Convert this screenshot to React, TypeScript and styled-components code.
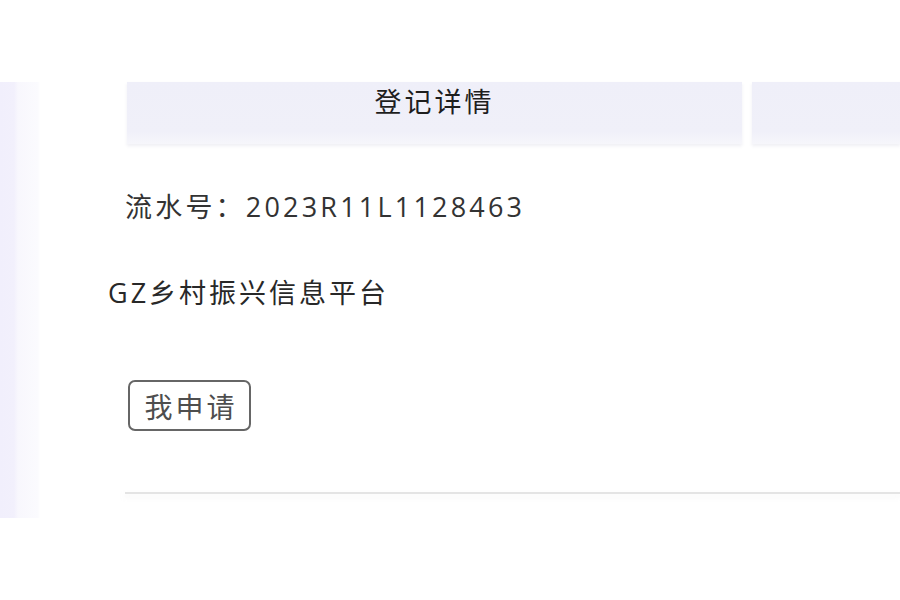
import React from "react";
import styled, { createGlobalStyle } from "styled-components";

const GlobalStyle = createGlobalStyle`
  html, body {
    margin: 0;
    padding: 0;
    background: #ffffff;
    overflow: hidden;
  }
  body {
    font-family: "Open Sans", "Noto Sans CJK SC", sans-serif;
  }
`;

const tabs = ["登记详情", ""];

const App = () => {
  return (
    <>
      <GlobalStyle />
      <Page>
        <SideStrip />
        <Main>
          <TabBar>
            {tabs.map((label, i) => (
              <Tab key={i} $grow={i > 0}>
                {label}
              </Tab>
            ))}
          </TabBar>
          <Serial>流水号：2023R11L1128463</Serial>
          <Platform>GZ乡村振兴信息平台</Platform>
          <ApplyButton>我申请</ApplyButton>
          <Divider />
        </Main>
      </Page>
    </>
  );
};

export default App;

const Page = styled.div`
  display: flex;
  flex-direction: row;
  width: 900px;
  height: 600px;
  padding-top: 82px;
  box-sizing: border-box;
`;

const SideStrip = styled.div`
  flex-shrink: 0;
  width: 40px;
  height: 436px;
  background: linear-gradient(
    to right,
    #f1effc 0px,
    #f2f0fc 14px,
    #f8f7fd 18px,
    #fbfbfe 38px,
    #ffffff 40px
  );
`;

const Main = styled.div`
  display: flex;
  flex-direction: column;
  flex: 1;
  margin-left: 68px;
  min-width: 0;
`;

const TabBar = styled.div`
  display: flex;
  flex-direction: row;
  gap: 10px;
  padding-left: 19px;
  height: 65px;
`;

const Tab = styled.div<{ $grow?: boolean }>`
  flex: ${(p) => (p.$grow ? "1" : "0 0 615px")};
  height: 62px;
  background: linear-gradient(to bottom, #efeff9 0%, #f0f0f9 80%, #f6f6fb 100%);
  box-shadow: 0 2px 3px rgba(228, 228, 236, 0.6);
  text-align: center;
  font-size: 27px;
  letter-spacing: 3px;
  line-height: 40px;
  color: #1e1e1e;
`;

const Serial = styled.div`
  margin-top: 40px;
  padding-left: 17px;
  font-size: 27px;
  letter-spacing: 3.2px;
  line-height: 40px;
  color: #333333;
`;

const Platform = styled.div`
  margin-top: 46px;
  font-size: 27px;
  letter-spacing: 3px;
  line-height: 40px;
  color: #282828;
`;

const ApplyButton = styled.button`
  align-self: flex-start;
  margin-top: 67px;
  margin-left: 20px;
  width: 123px;
  height: 51px;
  padding: 0;
  background: #ffffff;
  border: 2px solid #666666;
  border-radius: 7px;
  font-family: "Open Sans", "Noto Sans CJK SC", sans-serif;
  font-size: 28px;
  letter-spacing: 3px;
  text-indent: 3px;
  color: #4e4e4e;
`;

const Divider = styled.div`
  margin-top: 61px;
  margin-left: 17px;
  height: 2px;
  background: #e4e4e4;
  box-shadow: 0 3px 4px rgba(235, 235, 235, 0.5);
`;
